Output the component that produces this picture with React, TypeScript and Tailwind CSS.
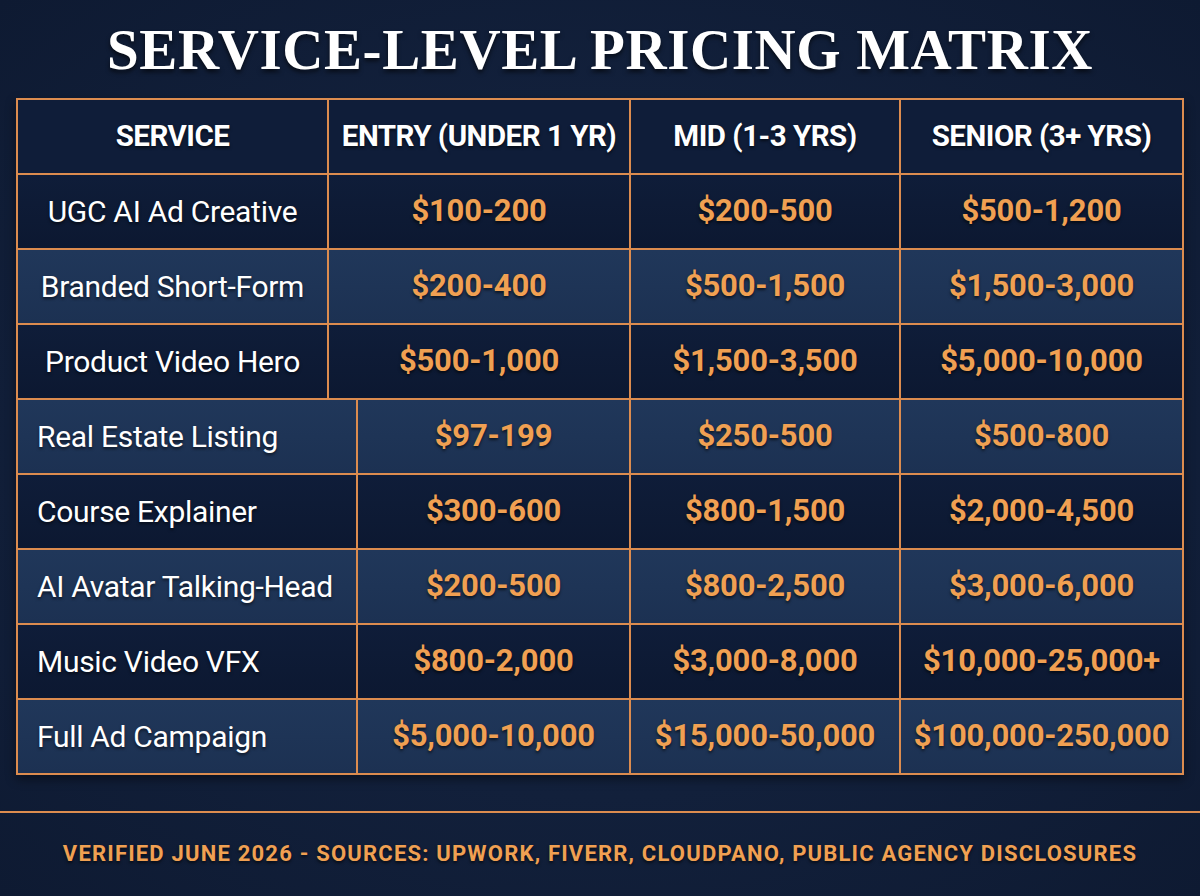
import React from "react";

type Row = { service: string; entry: string; mid: string; senior: string; light: boolean };

const TOP_ROWS: Row[] = [
  { service: "UGC AI Ad Creative", entry: "$100-200", mid: "$200-500", senior: "$500-1,200", light: false },
  { service: "Branded Short-Form", entry: "$200-400", mid: "$500-1,500", senior: "$1,500-3,000", light: true },
  { service: "Product Video Hero", entry: "$500-1,000", mid: "$1,500-3,500", senior: "$5,000-10,000", light: false },
];

const BOTTOM_ROWS: Row[] = [
  { service: "Real Estate Listing", entry: "$97-199", mid: "$250-500", senior: "$500-800", light: true },
  { service: "Course Explainer", entry: "$300-600", mid: "$800-1,500", senior: "$2,000-4,500", light: false },
  { service: "AI Avatar Talking-Head", entry: "$200-500", mid: "$800-2,500", senior: "$3,000-6,000", light: true },
  { service: "Music Video VFX", entry: "$800-2,000", mid: "$3,000-8,000", senior: "$10,000-25,000+", light: false },
  { service: "Full Ad Campaign", entry: "$5,000-10,000", mid: "$15,000-50,000", senior: "$100,000-250,000", light: true },
];

const HEADERS = ["SERVICE", "ENTRY (UNDER 1 YR)", "MID (1-3 YRS)", "SENIOR (3+ YRS)"];

const cellBg = (light: boolean) =>
  light
    ? "bg-[linear-gradient(180deg,#20375a_0%,#1c3152_100%)]"
    : "bg-[linear-gradient(180deg,#0f1d39_0%,#0c1831_100%)]";

function PriceRow({ row, wide }: { row: Row; wide: boolean }) {
  const bg = cellBg(row.light);
  return (
    <div
      className={`grid h-[73px] gap-[2px] ${
        wide ? "grid-cols-[338px_271px_268px_281px]" : "grid-cols-[309px_300px_268px_281px]"
      }`}
    >
      <div
        className={`${bg} flex items-center ${
          wide ? "justify-start pl-[19px]" : "justify-center"
        } text-[30px] text-white tracking-[-0.3px] [text-shadow:0_2px_3px_rgba(0,0,0,0.55)]`}
      >
        {row.service}
      </div>
      {[row.entry, row.mid, row.senior].map((price, i) => (
        <div
          key={i}
          className={`${bg} flex items-center justify-center text-[31px] font-bold text-[#f0a052] tracking-[-0.2px] [text-shadow:0_2px_3px_rgba(0,0,0,0.6)]`}
        >
          {price}
        </div>
      ))}
    </div>
  );
}

export default function App() {
  return (
    <div className="w-[1200px] h-[896px] overflow-hidden bg-[radial-gradient(ellipse_at_center,#182846_0%,#12203b_55%,#0e1a32_100%)] font-['Roboto','Liberation_Sans',sans-serif]">
      {/* Title */}
      <h1 className="h-[98px] flex items-center justify-center pt-[2px] font-['Liberation_Serif',serif] font-bold text-[57px] tracking-[0.6px] text-white [text-shadow:0_3px_4px_rgba(0,0,0,0.6)]">
        SERVICE-LEVEL PRICING MATRIX
      </h1>

      {/* Table */}
      <div className="mx-[16px] flex flex-col gap-[2px] p-[2px] bg-[#dc8c4f] shadow-[0_4px_10px_rgba(0,0,0,0.45)]">
        <div className="grid h-[73px] grid-cols-[309px_300px_268px_281px] gap-[2px]">
          {HEADERS.map((h) => (
            <div
              key={h}
              className="bg-[#0f1d39] flex items-center justify-center text-[29.5px] font-bold text-white tracking-[-0.5px] [text-shadow:0_2px_3px_rgba(0,0,0,0.6)]"
            >
              {h}
            </div>
          ))}
        </div>
        {TOP_ROWS.map((r) => (
          <PriceRow key={r.service} row={r} wide={false} />
        ))}
        {BOTTOM_ROWS.map((r) => (
          <PriceRow key={r.service} row={r} wide={true} />
        ))}
      </div>

      {/* Footer */}
      <div className="mt-[36px] h-[2px] bg-[#dc8c4f]" />
      <p className="mt-[24px] text-center text-[22px] font-bold tracking-[1.2px] text-[#f0a052] [text-shadow:0_2px_3px_rgba(0,0,0,0.6)]">
        VERIFIED JUNE 2026 - SOURCES: UPWORK, FIVERR, CLOUDPANO, PUBLIC AGENCY DISCLOSURES
      </p>
    </div>
  );
}
